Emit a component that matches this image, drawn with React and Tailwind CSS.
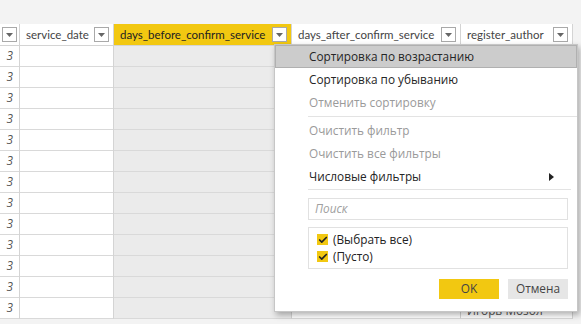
import { Check } from "lucide-react";

const columns = [
  { key: "idx", label: "", width: "w-[20px]" },
  { key: "service_date", label: "service_date", width: "w-[94px]" },
  { key: "days_before", label: "days_before_confirm_service", width: "w-[178px]", active: true },
  { key: "days_after", label: "days_after_confirm_service", width: "w-[169px]" },
  { key: "author", label: "register_author", width: "w-[112px]" },
];

const rows = Array.from({ length: 13 });

function DropButton() {
  return (
    <span className="flex h-[15px] w-[15px] shrink-0 items-center justify-center border border-[#a9a9a9] bg-white">
      <svg width="7" height="4" viewBox="0 0 7 4">
        <path d="M0 0h7L3.5 4z" fill="#666" />
      </svg>
    </span>
  );
}

function MenuItem({ children, muted, active, arrow }) {
  return (
    <div
      className={`flex h-[23px] items-center pl-[33px] pr-[22px] ${
        active ? "border border-[#b0b0b0] bg-[#cccccc]" : "border border-transparent"
      } ${muted ? "text-[#9a9a9a]" : "text-[#252525]"}`}
    >
      <span className="flex-1">{children}</span>
      {arrow && (
        <svg width="5" height="8" viewBox="0 0 5 8">
          <path d="M0 0l5 4-5 4z" fill="#222" />
        </svg>
      )}
    </div>
  );
}

function Tick() {
  return (
    <span className="flex h-[11px] w-[11px] items-center justify-center bg-[#f2c811]">
      <Check size={10} strokeWidth={4} color="#222" />
    </span>
  );
}

export default function App() {
  return (
    <div
      className="relative h-[324px] w-[581px] overflow-hidden bg-[#f3f3f3] text-[11.8px]"
      style={{ fontFamily: '"Open Sans", "Noto Sans", sans-serif' }}
    >
      <div className="h-[24px]" />
      <div className="flex">
        {columns.map((col) => (
          <div key={col.key} className={`${col.width} shrink-0 border-r border-[#d4d4d4]`}>
            <div
              className={`flex h-[22px] items-center gap-1 border-b border-[#d4d4d4] font-['Lato',sans-serif] text-[11.5px] ${
                col.active ? "bg-[#f2c811] text-[#222]" : "bg-white text-[#444]"
              } ${col.key === "idx" ? "justify-center" : "pl-[6px] pr-[4px]"}`}
            >
              {col.label && <span className="flex-1 whitespace-nowrap">{col.label}</span>}
              <DropButton />
            </div>
            {rows.map((_, i) => (
              <div
                key={i}
                className={`flex h-[21px] items-center border-b border-[#d9d9d9] ${
                  col.active ? "bg-[#ebebeb]" : "bg-white"
                }`}
              >
                {col.key === "idx" && (
                  <span className="w-full pr-[6px] text-right italic text-[#555]">3</span>
                )}
                {col.key === "author" && i === 12 && (
                  <span className="pl-[6px] pt-[6px] text-[#555]">Игорь Мозол</span>
                )}
              </div>
            ))}
          </div>
        ))}
      </div>

      <div className="absolute left-[274px] top-[44px] h-[268px] w-[304px] border border-[#c6c6c6] bg-white shadow-[2px_3px_6px_rgba(0,0,0,0.3)]">
        <MenuItem active>Сортировка по возрастанию</MenuItem>
        <MenuItem>Сортировка по убыванию</MenuItem>
        <MenuItem muted>Отменить сортировку</MenuItem>
        <div className="ml-[33px] my-[2px] h-px bg-[#e3e3e3]" />
        <MenuItem muted>Очистить фильтр</MenuItem>
        <MenuItem muted>Очистить все фильтры</MenuItem>
        <MenuItem arrow>Числовые фильтры</MenuItem>
        <div className="ml-[33px] mr-[6px] mt-[1px] h-px bg-[#e3e3e3]" />
        <div className="ml-[33px] mr-[9px] mt-[8px] flex h-[22px] items-center border border-[#e1e1e1] px-[6px] italic text-[#a0a0a0]">
          Поиск
        </div>
        <div className="ml-[33px] mr-[9px] mt-[7px] flex h-[42px] flex-col justify-center gap-[6px] border border-[#e1e1e1] pl-[8px] text-[#222]">
          <div className="flex h-[11px] items-center gap-[5px]">
            <Tick />
            <span>(Выбрать все)</span>
          </div>
          <div className="flex h-[11px] items-center gap-[5px]">
            <Tick />
            <span>(Пусто)</span>
          </div>
        </div>
        <div className="mr-[9px] mt-[10px] flex justify-end gap-[9px]">
          <button className="h-[20px] w-[60px] bg-[#f2c811] text-[#444]">OK</button>
          <button className="h-[20px] w-[60px] bg-[#e6e6e6] text-[#444]">Отмена</button>
        </div>
      </div>
    </div>
  );
}
